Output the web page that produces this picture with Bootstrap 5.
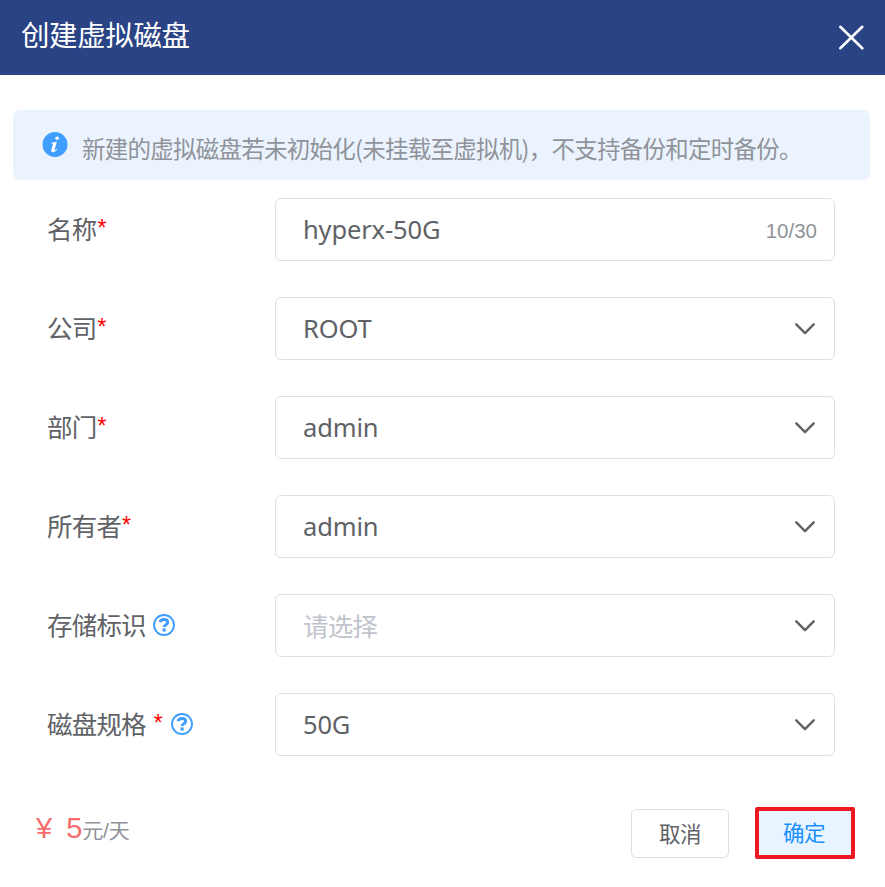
<!DOCTYPE html>
<html lang="zh-CN">
<head>
<meta charset="utf-8">
<meta name="viewport" content="width=device-width, initial-scale=1">
<title>创建虚拟磁盘</title>
<link rel="stylesheet" href="https://cdn.jsdelivr.net/npm/bootstrap@5.3.0/dist/css/bootstrap.min.css">
<style>
body{font-family:"Noto Sans","Noto Sans CJK SC",sans-serif;color:#606266;overflow:hidden}
.dlg-head{height:75px;background:#2a4384;padding:0 21px 0 21px}
.dlg-title{font-size:28.5px;letter-spacing:-.4px;line-height:40px;padding-bottom:5px}
.notice{height:70px;margin:35px 15px 0 13px;padding-left:29px;background:#ebf3ff;border-radius:7px;color:#909399}
.notice svg{margin:0 14px 1px 0}
.notice-text{font-family:"Noto Sans CJK SC",sans-serif;font-size:23.5px;letter-spacing:-.75px;line-height:34px;padding-top:6px;white-space:nowrap}
.form-rows{padding:18px 50px 0 47px;gap:36px}
.lbl{width:228px;font-size:25.5px;letter-spacing:-.8px;line-height:36px;padding-bottom:2px}
.req{font-family:"Liberation Sans",sans-serif;color:#f00;font-size:23px;letter-spacing:0;line-height:20px;padding-bottom:2px;margin-left:1px}
.req-gap{margin-left:8px}
.help{margin-left:7px}
.req-gap + .help{margin-left:8px}
.field{height:63px;border:1px solid #dcdfe6;border-radius:6px;padding:0 19px 0 27px;font-size:25.5px}
.field-val{line-height:36px;padding-bottom:2px;letter-spacing:-.15px}
.hint{color:#c0c4cc;letter-spacing:-.8px;padding-bottom:0}
.chev{margin-top:1px}
.count{font-family:"Liberation Sans",sans-serif;font-size:20.5px;color:#909399;padding-top:3px;margin-right:-2px}
.foot{padding:51px 30px 0 36px}
.price{font-family:"Liberation Sans","Noto Sans CJK SC",sans-serif;color:#f56c6c;font-size:29px;line-height:40px;padding-bottom:8px}
.price-num{margin-left:14px}
.unit{font-size:21px;color:#909399;letter-spacing:-.2px}
.b-act{height:49px;width:98px;font-size:21.5px;letter-spacing:-.5px;padding:2px 0 0;border:1px solid #dcdfe6;border-radius:5px;color:#606266}
.b-cancel{margin-right:26px}
.b-ok{height:52px;width:100px;padding:1px 2px 0 0;border:4px solid #ee1822;border-radius:2px;background:#e8f4ff;color:#1890ff}
</style>
<script src="https://cdn.jsdelivr.net/npm/bootstrap@5.3.0/dist/js/bootstrap.bundle.min.js"></script>
</head>
<body class="bg-white">
<svg class="d-none" xmlns="http://www.w3.org/2000/svg">
<symbol id="chev" viewBox="0 0 20 12"><path d="M1.3 1.3 10 10.2 18.7 1.3" fill="none" stroke="#606266" stroke-width="2.4" stroke-linecap="round" stroke-linejoin="round"/></symbol>
<symbol id="help" viewBox="0 0 22 22"><circle cx="11" cy="11" r="10" fill="none" stroke="#409eff" stroke-width="1.9"/><path d="M7 8.2C7.5 6.2 9 5.4 11 5.4c2.2 0 3.7 1.1 3.7 2.9 0 2.4-3.5 2.4-3.6 4.7" fill="none" stroke="#409eff" stroke-width="3"/><path d="M9.5 14.4h3.2v3.2h-3.2z" fill="#409eff"/></symbol>
</svg>
<header class="dlg-head d-flex align-items-center justify-content-between text-white">
<div class="dlg-title">创建虚拟磁盘</div>
<svg width="26" height="26" viewBox="0 0 26 26"><path d="M2.3 1.8 24.3 23.3M24.3 1.8 2.3 23.3" stroke="#fff" stroke-width="2.6" stroke-linecap="round"/></svg>
</header>
<main>
<div class="notice d-flex align-items-center">
<svg width="26" height="25" viewBox="-.5 0 26 25"><circle cx="12.5" cy="12.5" r="12.5" fill="#409eff"/><circle cx="14.6" cy="6.3" r="1.8" fill="#fff"/><path d="M8.9 10.7c1.9-.2 3.6-.6 5.5-1.2l-2.3 8.2c-.3 1.2.4 1 1.9-.9l.7.5c-1.4 2.1-2.7 3-4.2 3-1.6 0-2.1-1-1.7-2.5l1.5-5.1c.3-1.1-.2-1.3-1.4-1.2z" fill="#fff"/></svg>
<div class="notice-text">新建的虚拟磁盘若未初始化(未挂载至虚拟机)，不支持备份和定时备份。</div>
</div>
<div class="form-rows d-flex flex-column">
<div class="d-flex align-items-center"><div class="lbl d-flex align-items-center">名称<span class="req">*</span></div><div class="field flex-fill d-flex align-items-center justify-content-between"><span class="field-val">hyperx-50G</span><span class="count">10/30</span></div></div>
<div class="d-flex align-items-center"><div class="lbl d-flex align-items-center">公司<span class="req">*</span></div><div class="field flex-fill d-flex align-items-center justify-content-between"><span class="field-val">ROOT</span><svg class="chev" width="20" height="12"><use href="#chev"/></svg></div></div>
<div class="d-flex align-items-center"><div class="lbl d-flex align-items-center">部门<span class="req">*</span></div><div class="field flex-fill d-flex align-items-center justify-content-between"><span class="field-val">admin</span><svg class="chev" width="20" height="12"><use href="#chev"/></svg></div></div>
<div class="d-flex align-items-center"><div class="lbl d-flex align-items-center">所有者<span class="req">*</span></div><div class="field flex-fill d-flex align-items-center justify-content-between"><span class="field-val">admin</span><svg class="chev" width="20" height="12"><use href="#chev"/></svg></div></div>
<div class="d-flex align-items-center"><div class="lbl d-flex align-items-center">存储标识<svg class="help" width="22" height="22"><use href="#help"/></svg></div><div class="field flex-fill d-flex align-items-center justify-content-between"><span class="field-val hint">请选择</span><svg class="chev" width="20" height="12"><use href="#chev"/></svg></div></div>
<div class="d-flex align-items-center"><div class="lbl d-flex align-items-center">磁盘规格<span class="req req-gap">*</span><svg class="help" width="22" height="22"><use href="#help"/></svg></div><div class="field flex-fill d-flex align-items-center justify-content-between"><span class="field-val">50G</span><svg class="chev" width="20" height="12"><use href="#chev"/></svg></div></div>
</div>
</main>
<footer class="foot d-flex align-items-center justify-content-between">
<div class="price">¥<span class="price-num">5</span><span class="unit">元/天</span></div>
<div class="d-flex align-items-center">
<button type="button" class="btn b-act b-cancel">取消</button>
<button type="button" class="btn b-act b-ok">确定</button>
</div>
</footer>
</body>
</html>
